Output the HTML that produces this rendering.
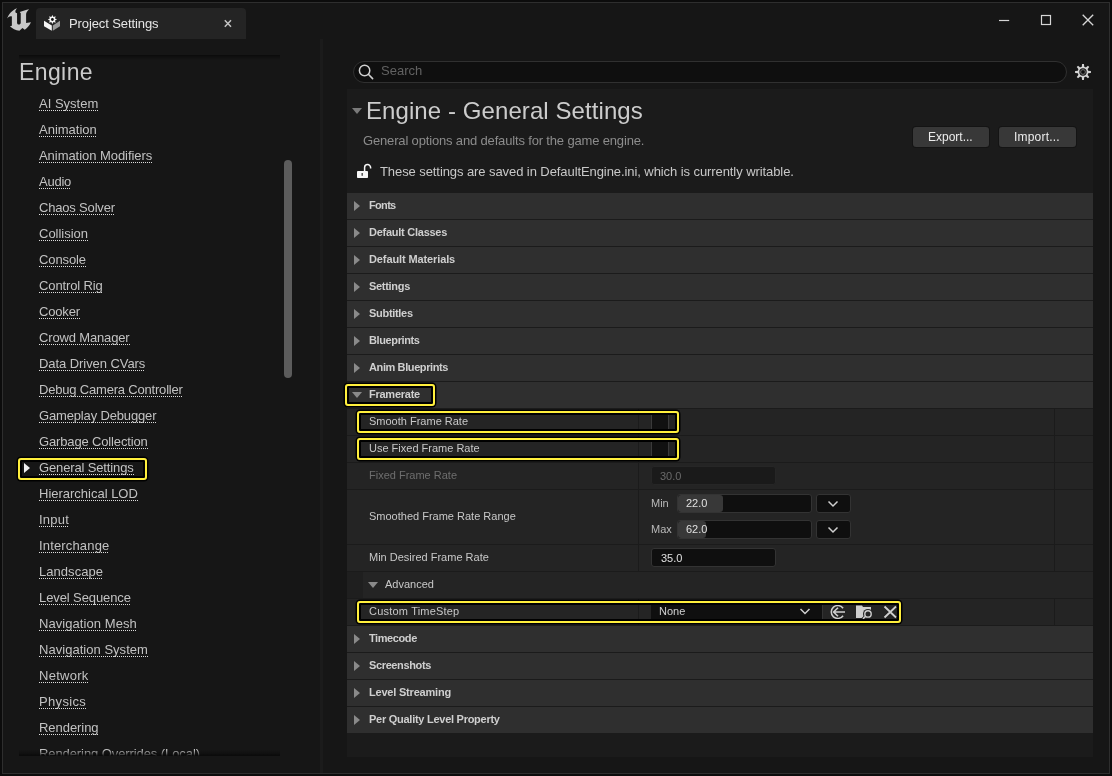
<!DOCTYPE html>
<html><head><meta charset="utf-8">
<style>
*{box-sizing:border-box;margin:0;padding:0}
html,body{width:1112px;height:776px;overflow:hidden;background:#0c0c0c;font-family:"Liberation Sans",sans-serif;}
.abs{position:absolute}
.t{position:absolute;white-space:nowrap;line-height:1;will-change:transform}
.hl{position:absolute;border:2px solid #ffef3c;border-radius:3px;box-shadow:0 0 0 1.5px #000,inset 0 0 0 2px #000}
.u{position:absolute;height:1px;background:repeating-linear-gradient(90deg,#dcdcdc 0 1px,transparent 1px 2px)}
svg{position:absolute;overflow:visible}
</style></head><body>

<div class="abs" style="left:2px;top:2px;width:1108px;height:772px;background:#161616;border:1px solid #2e2e2e"></div>
<svg style="left:6px;top:7px" width="26" height="26" viewBox="0 0 776 776"><path fill="#c8c8c8" d="M 35 345 C 65 235, 170 95, 330 35 C 285 80, 265 130, 290 170 L 330 185 L 330 470 C 330 510, 360 525, 385 525 C 415 525, 440 505, 440 470 L 440 185 L 410 150 C 500 120, 600 80, 690 65 C 640 110, 600 160, 600 220 L 600 480 L 745 455 C 700 560, 620 640, 560 680 L 490 630 L 400 712 C 290 700, 180 640, 118 575 L 175 560 L 175 280 C 130 260, 80 280, 35 345 Z"/></svg>
<div class="abs" style="left:36px;top:8px;width:210px;height:31px;background:#242424;border-radius:4px 4px 0 0"></div>
<svg style="left:42px;top:12px" width="20" height="20" viewBox="42 12 20 20">
<polygon fill="#f4f4f4" points="44,20.8 51.8,25.4 51.8,30.8 44,26.2"/>
<polygon fill="#9a9a9a" points="52.8,25.4 60,20.8 60,26.2 52.8,30.8"/>
<g transform="translate(52.4,19.5)" fill="#f4f4f4">
<path d="M0,-4.6 L1.1,-2.6 L3.25,-3.25 L2.6,-1.1 L4.6,0 L2.6,1.1 L3.25,3.25 L1.1,2.6 L0,4.6 L-1.1,2.6 L-3.25,3.25 L-2.6,1.1 L-4.6,0 L-2.6,-1.1 L-3.25,-3.25 L-1.1,-2.6 Z"/>
<circle r="1.4" fill="#111"/>
</g></svg>
<div class="t" style="left:69px;top:17px;font-size:13px;color:#e6e6e6;font-weight:normal;letter-spacing:-0.1px;">Project Settings</div>
<svg style="left:222px;top:17px" width="13" height="13" viewBox="0 0 13 13"><path d="M2.8 3.2 L9.0 9.8 M9.0 3.2 L2.8 9.8" stroke="#c4c4c4" stroke-width="1.5"/></svg>
<svg style="left:990px;top:5px" width="120" height="35" viewBox="990 5 120 35">
<path d="M999 20.5 H1009.2" stroke="#d6d6d6" stroke-width="1.2"/>
<rect x="1041.5" y="15.5" width="9" height="9" fill="none" stroke="#d6d6d6" stroke-width="1.2"/>
<path d="M1082.7 14.8 L1093.2 25.3 M1093.2 14.8 L1082.7 25.3" stroke="#d6d6d6" stroke-width="1.3"/>
</svg>
<div class="abs" style="left:19px;top:55px;width:261px;height:5px;background:linear-gradient(#0a0a0a,#0f0f0f 30%,rgba(22,22,22,0));"></div>
<div class="t" style="left:18.6px;top:61px;font-size:23px;color:#cacaca;font-weight:normal;letter-spacing:0.4px;">Engine</div>
<div class="t" style="left:38.7px;top:97px;font-size:13px;color:#c2c2c2;font-weight:normal;letter-spacing:0.0px;">AI System</div>
<div class="u" style="left:39px;top:110px;width:59px"></div>
<div class="t" style="left:38.7px;top:123px;font-size:13px;color:#c2c2c2;font-weight:normal;letter-spacing:0.0px;">Animation</div>
<div class="u" style="left:39px;top:136px;width:58px"></div>
<div class="t" style="left:38.7px;top:149px;font-size:13px;color:#c2c2c2;font-weight:normal;letter-spacing:-0.05px;">Animation Modifiers</div>
<div class="u" style="left:39px;top:162px;width:113px"></div>
<div class="t" style="left:38.7px;top:175px;font-size:13px;color:#c2c2c2;font-weight:normal;letter-spacing:-0.25px;">Audio</div>
<div class="u" style="left:39px;top:188px;width:32px"></div>
<div class="t" style="left:38.7px;top:201px;font-size:13px;color:#c2c2c2;font-weight:normal;letter-spacing:-0.182px;">Chaos Solver</div>
<div class="u" style="left:39px;top:214px;width:76px"></div>
<div class="t" style="left:38.7px;top:227px;font-size:13px;color:#c2c2c2;font-weight:normal;letter-spacing:-0.013px;">Collision</div>
<div class="u" style="left:39px;top:240px;width:49px"></div>
<div class="t" style="left:38.7px;top:253px;font-size:13px;color:#c2c2c2;font-weight:normal;letter-spacing:-0.1px;">Console</div>
<div class="u" style="left:39px;top:266px;width:47px"></div>
<div class="t" style="left:38.7px;top:279px;font-size:13px;color:#c2c2c2;font-weight:normal;letter-spacing:-0.12px;">Control Rig</div>
<div class="u" style="left:39px;top:292px;width:64px"></div>
<div class="t" style="left:38.7px;top:305px;font-size:13px;color:#c2c2c2;font-weight:normal;letter-spacing:-0.16px;">Cooker</div>
<div class="u" style="left:39px;top:318px;width:41px"></div>
<div class="t" style="left:38.7px;top:331px;font-size:13px;color:#c2c2c2;font-weight:normal;letter-spacing:-0.15px;">Crowd Manager</div>
<div class="u" style="left:39px;top:344px;width:91px"></div>
<div class="t" style="left:38.7px;top:357px;font-size:13px;color:#c2c2c2;font-weight:normal;letter-spacing:-0.069px;">Data Driven CVars</div>
<div class="u" style="left:39px;top:370px;width:106px"></div>
<div class="t" style="left:38.7px;top:383px;font-size:13px;color:#c2c2c2;font-weight:normal;letter-spacing:-0.191px;">Debug Camera Controller</div>
<div class="u" style="left:39px;top:396px;width:144px"></div>
<div class="t" style="left:38.7px;top:409px;font-size:13px;color:#c2c2c2;font-weight:normal;letter-spacing:-0.156px;">Gameplay Debugger</div>
<div class="u" style="left:39px;top:422px;width:117px"></div>
<div class="t" style="left:38.7px;top:435px;font-size:13px;color:#c2c2c2;font-weight:normal;letter-spacing:-0.147px;">Garbage Collection</div>
<div class="u" style="left:39px;top:448px;width:109px"></div>
<div class="t" style="left:38.7px;top:461px;font-size:13px;color:#c2c2c2;font-weight:normal;letter-spacing:-0.14px;">General Settings</div>
<div class="u" style="left:39px;top:474px;width:95px"></div>
<div class="t" style="left:38.7px;top:487px;font-size:13px;color:#c2c2c2;font-weight:normal;letter-spacing:-0.007px;">Hierarchical LOD</div>
<div class="u" style="left:39px;top:500px;width:99px"></div>
<div class="t" style="left:38.7px;top:513px;font-size:13px;color:#c2c2c2;font-weight:normal;letter-spacing:0.225px;">Input</div>
<div class="u" style="left:39px;top:526px;width:30px"></div>
<div class="t" style="left:38.7px;top:539px;font-size:13px;color:#c2c2c2;font-weight:normal;letter-spacing:0.16px;">Interchange</div>
<div class="u" style="left:39px;top:552px;width:70px"></div>
<div class="t" style="left:38.7px;top:565px;font-size:13px;color:#c2c2c2;font-weight:normal;letter-spacing:0.05px;">Landscape</div>
<div class="u" style="left:39px;top:578px;width:64px"></div>
<div class="t" style="left:38.7px;top:591px;font-size:13px;color:#c2c2c2;font-weight:normal;letter-spacing:-0.1px;">Level Sequence</div>
<div class="u" style="left:39px;top:604px;width:92px"></div>
<div class="t" style="left:38.7px;top:617px;font-size:13px;color:#c2c2c2;font-weight:normal;letter-spacing:0.064px;">Navigation Mesh</div>
<div class="u" style="left:39px;top:630px;width:98px"></div>
<div class="t" style="left:38.7px;top:643px;font-size:13px;color:#c2c2c2;font-weight:normal;letter-spacing:0.031px;">Navigation System</div>
<div class="u" style="left:39px;top:656px;width:109px"></div>
<div class="t" style="left:38.7px;top:669px;font-size:13px;color:#c2c2c2;font-weight:normal;letter-spacing:0.267px;">Network</div>
<div class="u" style="left:39px;top:682px;width:49px"></div>
<div class="t" style="left:38.7px;top:695px;font-size:13px;color:#c2c2c2;font-weight:normal;letter-spacing:0.333px;">Physics</div>
<div class="u" style="left:39px;top:708px;width:47px"></div>
<div class="t" style="left:38.7px;top:721px;font-size:13px;color:#c2c2c2;font-weight:normal;letter-spacing:-0.05px;">Rendering</div>
<div class="u" style="left:39px;top:734px;width:60px"></div>
<div class="t" style="left:38.7px;top:747px;font-size:13px;color:#c2c2c2;font-weight:normal;letter-spacing:-0.088px;">Rendering Overrides (Local)</div>
<div class="u" style="left:39px;top:760px;width:161px"></div>
<div class="abs" style="left:3px;top:756px;width:317px;height:17px;background:#161616;"></div>
<div class="abs" style="left:19px;top:750px;width:261px;height:6px;background:linear-gradient(rgba(10,10,10,0),rgba(10,10,10,0.5) 60%,#0a0a0a);"></div>
<div class="hl" style="left:18px;top:458px;width:129px;height:22px"></div>
<div class="abs" style="left:24px;top:463px;width:0;height:0;border-left:6px solid #f0f0f0;border-top:5px solid transparent;border-bottom:5px solid transparent"></div>
<div class="abs" style="left:284px;top:160px;width:8px;height:218px;background:#5c5c5c;border-radius:4px"></div>
<div class="abs" style="left:320px;top:39px;width:3px;height:734px;background:#1b1b1b;"></div>
<div class="abs" style="left:353px;top:61px;width:714px;height:22px;background:#0f0f0f;border:1px solid #303030;border-radius:11px"></div>
<svg style="left:355px;top:62px" width="20" height="20" viewBox="355 62 20 20"><circle cx="364.6" cy="70.5" r="5.2" fill="none" stroke="#d0d0d0" stroke-width="1.5"/><path d="M368.6 74.5 L372.6 78.6" stroke="#d0d0d0" stroke-width="1.6" stroke-linecap="round"/></svg>
<div class="t" style="left:381px;top:64px;font-size:13px;color:#626262;font-weight:normal;letter-spacing:0px;">Search</div>
<svg style="left:1073px;top:62px" width="20" height="20" viewBox="-10 -10 20 20"><g fill="#d4d4d4"><path d="M-1.25 -4.5 L-0.95 -7.9 H0.95 L1.25 -4.5 Z" transform="rotate(0)"/><path d="M-1.25 -4.5 L-0.95 -7.9 H0.95 L1.25 -4.5 Z" transform="rotate(45)"/><path d="M-1.25 -4.5 L-0.95 -7.9 H0.95 L1.25 -4.5 Z" transform="rotate(90)"/><path d="M-1.25 -4.5 L-0.95 -7.9 H0.95 L1.25 -4.5 Z" transform="rotate(135)"/><path d="M-1.25 -4.5 L-0.95 -7.9 H0.95 L1.25 -4.5 Z" transform="rotate(180)"/><path d="M-1.25 -4.5 L-0.95 -7.9 H0.95 L1.25 -4.5 Z" transform="rotate(225)"/><path d="M-1.25 -4.5 L-0.95 -7.9 H0.95 L1.25 -4.5 Z" transform="rotate(270)"/><path d="M-1.25 -4.5 L-0.95 -7.9 H0.95 L1.25 -4.5 Z" transform="rotate(315)"/><circle r="5.4"/></g><circle r="3.7" fill="#141414"/><circle r="2.4" fill="none" stroke="#707070" stroke-width="1"/><circle r="1.1" fill="#0e0e0e"/></svg>
<div class="abs" style="left:347px;top:89px;width:746px;height:668px;background:#1b1b1b;"></div>
<div class="abs" style="left:352px;top:108px;width:0;height:0;border-top:6px solid #7a7a7a;border-left:5px solid transparent;border-right:5px solid transparent"></div>
<div class="t" style="left:366px;top:99px;font-size:24px;color:#cccccc;font-weight:normal;letter-spacing:0.08px;">Engine - General Settings</div>
<div class="t" style="left:363px;top:134px;font-size:13px;color:#8c8c8c;font-weight:normal;letter-spacing:-0.16px;">General options and defaults for the game engine.</div>
<div class="abs" style="left:913px;top:127px;width:76px;height:20px;background:#383838;border-radius:3px;box-shadow:0 0 0 1px #141414"></div>
<div class="abs" style="left:999px;top:127px;width:77px;height:20px;background:#383838;border-radius:3px;box-shadow:0 0 0 1px #141414"></div>
<div class="t" style="left:928px;top:131px;font-size:12px;color:#ececec;font-weight:normal;letter-spacing:0px;">Export...</div>
<div class="t" style="left:1014px;top:131px;font-size:12px;color:#ececec;font-weight:normal;letter-spacing:0.2px;">Import...</div>
<svg style="left:352px;top:160px" width="25" height="22" viewBox="352 160 25 22"><rect x="357" y="171" width="11" height="7" rx="0.8" fill="#f6f6f6"/><rect x="361.6" y="173" width="1.1" height="2.8" fill="#1b1b1b"/><path d="M364.6 171.5 V167.6 A3 3 0 0 1 370.6 167.6 V168.6" fill="none" stroke="#f6f6f6" stroke-width="1.5"/></svg>
<div class="t" style="left:380px;top:165px;font-size:13px;color:#c8c8c8;font-weight:normal;letter-spacing:-0.08px;">These settings are saved in DefaultEngine.ini, which is currently writable.</div>
<div class="abs" style="left:347px;top:193px;width:746px;height:26px;background:#2f2f2f;"></div>
<div class="abs" style="left:347px;top:219px;width:746px;height:1px;background:#1b1b1b;"></div>
<div class="abs" style="left:354px;top:201px;width:0;height:0;border-left:6px solid #8a8a8a;border-top:5px solid transparent;border-bottom:5px solid transparent"></div>
<div class="t" style="left:369px;top:200px;font-size:11px;color:#cfcfcf;font-weight:bold;letter-spacing:-0.675px;">Fonts</div>
<div class="abs" style="left:347px;top:220px;width:746px;height:26px;background:#2f2f2f;"></div>
<div class="abs" style="left:347px;top:246px;width:746px;height:1px;background:#1b1b1b;"></div>
<div class="abs" style="left:354px;top:228px;width:0;height:0;border-left:6px solid #8a8a8a;border-top:5px solid transparent;border-bottom:5px solid transparent"></div>
<div class="t" style="left:369px;top:227px;font-size:11px;color:#cfcfcf;font-weight:bold;letter-spacing:-0.257px;">Default Classes</div>
<div class="abs" style="left:347px;top:247px;width:746px;height:26px;background:#2f2f2f;"></div>
<div class="abs" style="left:347px;top:273px;width:746px;height:1px;background:#1b1b1b;"></div>
<div class="abs" style="left:354px;top:255px;width:0;height:0;border-left:6px solid #8a8a8a;border-top:5px solid transparent;border-bottom:5px solid transparent"></div>
<div class="t" style="left:369px;top:254px;font-size:11px;color:#cfcfcf;font-weight:bold;letter-spacing:-0.113px;">Default Materials</div>
<div class="abs" style="left:347px;top:274px;width:746px;height:26px;background:#2f2f2f;"></div>
<div class="abs" style="left:347px;top:300px;width:746px;height:1px;background:#1b1b1b;"></div>
<div class="abs" style="left:354px;top:282px;width:0;height:0;border-left:6px solid #8a8a8a;border-top:5px solid transparent;border-bottom:5px solid transparent"></div>
<div class="t" style="left:369px;top:281px;font-size:11px;color:#cfcfcf;font-weight:bold;letter-spacing:-0.3px;">Settings</div>
<div class="abs" style="left:347px;top:301px;width:746px;height:26px;background:#2f2f2f;"></div>
<div class="abs" style="left:347px;top:327px;width:746px;height:1px;background:#1b1b1b;"></div>
<div class="abs" style="left:354px;top:309px;width:0;height:0;border-left:6px solid #8a8a8a;border-top:5px solid transparent;border-bottom:5px solid transparent"></div>
<div class="t" style="left:369px;top:308px;font-size:11px;color:#cfcfcf;font-weight:bold;letter-spacing:-0.3px;">Subtitles</div>
<div class="abs" style="left:347px;top:328px;width:746px;height:26px;background:#2f2f2f;"></div>
<div class="abs" style="left:347px;top:354px;width:746px;height:1px;background:#1b1b1b;"></div>
<div class="abs" style="left:354px;top:336px;width:0;height:0;border-left:6px solid #8a8a8a;border-top:5px solid transparent;border-bottom:5px solid transparent"></div>
<div class="t" style="left:369px;top:335px;font-size:11px;color:#cfcfcf;font-weight:bold;letter-spacing:-0.378px;">Blueprints</div>
<div class="abs" style="left:347px;top:355px;width:746px;height:26px;background:#2f2f2f;"></div>
<div class="abs" style="left:347px;top:381px;width:746px;height:1px;background:#1b1b1b;"></div>
<div class="abs" style="left:354px;top:363px;width:0;height:0;border-left:6px solid #8a8a8a;border-top:5px solid transparent;border-bottom:5px solid transparent"></div>
<div class="t" style="left:369px;top:362px;font-size:11px;color:#cfcfcf;font-weight:bold;letter-spacing:-0.393px;">Anim Blueprints</div>
<div class="abs" style="left:347px;top:382px;width:746px;height:26px;background:#2f2f2f;"></div>
<div class="abs" style="left:347px;top:408px;width:746px;height:1px;background:#1b1b1b;"></div>
<div class="abs" style="left:352px;top:392px;width:0;height:0;border-top:6px solid #8a8a8a;border-left:5px solid transparent;border-right:5px solid transparent"></div>
<div class="t" style="left:369px;top:389px;font-size:11px;color:#cfcfcf;font-weight:bold;letter-spacing:-0.25px;">Framerate</div>
<div class="abs" style="left:347px;top:409px;width:746px;height:26px;background:#242424;"></div>
<div class="abs" style="left:347px;top:435px;width:746px;height:1px;background:#1b1b1b;"></div>
<div class="abs" style="left:638px;top:409px;width:1px;height:26px;background:#1b1b1b;"></div>
<div class="abs" style="left:1054px;top:409px;width:1px;height:26px;background:#1b1b1b;"></div>
<div class="t" style="left:369px;top:416px;font-size:11px;color:#c8c8c8;font-weight:normal;letter-spacing:0px;">Smooth Frame Rate</div>
<div class="abs" style="left:347px;top:436px;width:746px;height:26px;background:#242424;"></div>
<div class="abs" style="left:347px;top:462px;width:746px;height:1px;background:#1b1b1b;"></div>
<div class="abs" style="left:638px;top:436px;width:1px;height:26px;background:#1b1b1b;"></div>
<div class="abs" style="left:1054px;top:436px;width:1px;height:26px;background:#1b1b1b;"></div>
<div class="t" style="left:369px;top:443px;font-size:11px;color:#c8c8c8;font-weight:normal;letter-spacing:0px;">Use Fixed Frame Rate</div>
<div class="abs" style="left:347px;top:463px;width:746px;height:26px;background:#242424;"></div>
<div class="abs" style="left:347px;top:489px;width:746px;height:1px;background:#1b1b1b;"></div>
<div class="abs" style="left:638px;top:463px;width:1px;height:26px;background:#1b1b1b;"></div>
<div class="abs" style="left:1054px;top:463px;width:1px;height:26px;background:#1b1b1b;"></div>
<div class="t" style="left:369px;top:470px;font-size:11px;color:#6e6e6e;font-weight:normal;letter-spacing:0px;">Fixed Frame Rate</div>
<div class="abs" style="left:347px;top:490px;width:746px;height:54px;background:#242424;"></div>
<div class="abs" style="left:347px;top:544px;width:746px;height:1px;background:#1b1b1b;"></div>
<div class="abs" style="left:638px;top:490px;width:1px;height:54px;background:#1b1b1b;"></div>
<div class="abs" style="left:1054px;top:490px;width:1px;height:54px;background:#1b1b1b;"></div>
<div class="t" style="left:369px;top:511px;font-size:11px;color:#c8c8c8;font-weight:normal;letter-spacing:0px;">Smoothed Frame Rate Range</div>
<div class="abs" style="left:347px;top:545px;width:746px;height:26px;background:#242424;"></div>
<div class="abs" style="left:347px;top:571px;width:746px;height:1px;background:#1b1b1b;"></div>
<div class="abs" style="left:638px;top:545px;width:1px;height:26px;background:#1b1b1b;"></div>
<div class="abs" style="left:1054px;top:545px;width:1px;height:26px;background:#1b1b1b;"></div>
<div class="t" style="left:369px;top:552px;font-size:11px;color:#c8c8c8;font-weight:normal;letter-spacing:0px;">Min Desired Frame Rate</div>
<div class="abs" style="left:347px;top:572px;width:746px;height:26px;background:#242424;"></div>
<div class="abs" style="left:347px;top:572px;width:16px;height:26px;background:#1f1f1f;"></div>
<div class="abs" style="left:347px;top:598px;width:746px;height:1px;background:#1b1b1b;"></div>
<div class="abs" style="left:368px;top:582px;width:0;height:0;border-top:6px solid #8a8a8a;border-left:5px solid transparent;border-right:5px solid transparent"></div>
<div class="t" style="left:385px;top:579px;font-size:11px;color:#c8c8c8;font-weight:normal;letter-spacing:0px;">Advanced</div>
<div class="abs" style="left:347px;top:599px;width:746px;height:26px;background:#242424;"></div>
<div class="abs" style="left:347px;top:625px;width:746px;height:1px;background:#1b1b1b;"></div>
<div class="abs" style="left:638px;top:599px;width:1px;height:26px;background:#1b1b1b;"></div>
<div class="abs" style="left:1054px;top:599px;width:1px;height:26px;background:#1b1b1b;"></div>
<div class="t" style="left:369px;top:606px;font-size:11px;color:#c8c8c8;font-weight:normal;letter-spacing:0.2px;">Custom TimeStep</div>
<div class="abs" style="left:347px;top:626px;width:746px;height:26px;background:#2f2f2f;"></div>
<div class="abs" style="left:347px;top:652px;width:746px;height:1px;background:#1b1b1b;"></div>
<div class="abs" style="left:354px;top:634px;width:0;height:0;border-left:6px solid #8a8a8a;border-top:5px solid transparent;border-bottom:5px solid transparent"></div>
<div class="t" style="left:369px;top:633px;font-size:11px;color:#cfcfcf;font-weight:bold;letter-spacing:-0.414px;">Timecode</div>
<div class="abs" style="left:347px;top:653px;width:746px;height:26px;background:#2f2f2f;"></div>
<div class="abs" style="left:347px;top:679px;width:746px;height:1px;background:#1b1b1b;"></div>
<div class="abs" style="left:354px;top:661px;width:0;height:0;border-left:6px solid #8a8a8a;border-top:5px solid transparent;border-bottom:5px solid transparent"></div>
<div class="t" style="left:369px;top:660px;font-size:11px;color:#cfcfcf;font-weight:bold;letter-spacing:-0.37px;">Screenshots</div>
<div class="abs" style="left:347px;top:680px;width:746px;height:26px;background:#2f2f2f;"></div>
<div class="abs" style="left:347px;top:706px;width:746px;height:1px;background:#1b1b1b;"></div>
<div class="abs" style="left:354px;top:688px;width:0;height:0;border-left:6px solid #8a8a8a;border-top:5px solid transparent;border-bottom:5px solid transparent"></div>
<div class="t" style="left:369px;top:687px;font-size:11px;color:#cfcfcf;font-weight:bold;letter-spacing:-0.2px;">Level Streaming</div>
<div class="abs" style="left:347px;top:707px;width:746px;height:26px;background:#2f2f2f;"></div>
<div class="abs" style="left:347px;top:733px;width:746px;height:1px;background:#1b1b1b;"></div>
<div class="abs" style="left:354px;top:715px;width:0;height:0;border-left:6px solid #8a8a8a;border-top:5px solid transparent;border-bottom:5px solid transparent"></div>
<div class="t" style="left:369px;top:714px;font-size:11px;color:#cfcfcf;font-weight:bold;letter-spacing:-0.264px;">Per Quality Level Property</div>
<div class="abs" style="left:347px;top:733px;width:746px;height:24px;background:#1b1b1b;"></div>
<div class="abs" style="left:651px;top:413px;width:18px;height:18px;background:#111111;border:1px solid #3a3a3a"></div>
<div class="abs" style="left:651px;top:440px;width:18px;height:18px;background:#111111;border:1px solid #3a3a3a"></div>
<div class="abs" style="left:651px;top:466px;width:125px;height:19px;background:#1a1a1a;border:1px solid #262626;border-radius:3px"></div>
<div class="t" style="left:660px;top:471px;font-size:11px;color:#6a6a6a;font-weight:normal;letter-spacing:0px;">30.0</div>
<div class="t" style="left:651px;top:498px;font-size:11px;color:#b8b8b8;font-weight:normal;letter-spacing:0px;">Min</div>
<div class="t" style="left:651px;top:524px;font-size:11px;color:#b8b8b8;font-weight:normal;letter-spacing:0px;">Max</div>
<div class="abs" style="left:677px;top:494px;width:135px;height:19px;background:#0f0f0f;border:1px solid #333333;border-radius:3px"></div>
<div class="abs" style="left:678px;top:495px;width:45px;height:17px;background:#383838;border-radius:3px"></div>
<div class="t" style="left:686px;top:498px;font-size:11px;color:#e0e0e0;font-weight:normal;letter-spacing:0px;">22.0</div>
<div class="abs" style="left:816px;top:494px;width:35px;height:19px;background:#0f0f0f;border:1px solid #333333;border-radius:3px"></div>
<svg style="left:826px;top:499px" width="14" height="9" viewBox="0 0 14 9"><path d="M2.5 2.5 L7 7 L11.5 2.5" fill="none" stroke="#d0d0d0" stroke-width="1.5"/></svg>
<div class="abs" style="left:677px;top:520px;width:135px;height:19px;background:#0f0f0f;border:1px solid #333333;border-radius:3px"></div>
<div class="abs" style="left:678px;top:521px;width:28px;height:17px;background:#383838;border-radius:3px"></div>
<div class="t" style="left:686px;top:524px;font-size:11px;color:#e0e0e0;font-weight:normal;letter-spacing:0px;">62.0</div>
<div class="abs" style="left:816px;top:520px;width:35px;height:19px;background:#0f0f0f;border:1px solid #333333;border-radius:3px"></div>
<svg style="left:826px;top:525px" width="14" height="9" viewBox="0 0 14 9"><path d="M2.5 2.5 L7 7 L11.5 2.5" fill="none" stroke="#d0d0d0" stroke-width="1.5"/></svg>
<div class="abs" style="left:651px;top:548px;width:125px;height:19px;background:#0f0f0f;border:1px solid #333333;border-radius:3px"></div>
<div class="t" style="left:661px;top:553px;font-size:11px;color:#e0e0e0;font-weight:normal;letter-spacing:0px;">35.0</div>
<div class="abs" style="left:651px;top:603px;width:172px;height:20px;background:#0f0f0f;"></div>
<div class="abs" style="left:822px;top:603px;width:1px;height:20px;background:#333;"></div>
<div class="t" style="left:659px;top:606px;font-size:11px;color:#d0d0d0;font-weight:normal;letter-spacing:0px;">None</div>
<svg style="left:798px;top:606px" width="14" height="11" viewBox="0 0 14 11"><path d="M2.5 3 L7 7.5 L11.5 3" fill="none" stroke="#d0d0d0" stroke-width="1.5"/></svg>
<svg style="left:826px;top:602px" width="76" height="22" viewBox="826 602 76 22">
<path d="M843.1 608.3 A6.5 6.5 0 1 0 843.1 615.7" fill="none" stroke="#cfcfcf" stroke-width="1.5"/>
<path d="M845 612 H834 M838 607.7 L833.6 612 L838 616.3" fill="none" stroke="#cfcfcf" stroke-width="1.6"/>
<path d="M856 605.4 H862 L863 607 H871 V618 H856 Z" fill="#cfcfcf"/>
<circle cx="868" cy="613.9" r="5" fill="#242424"/>
<path d="M865.5 616.6 L862.8 619.2" stroke="#242424" stroke-width="3.4"/>
<circle cx="868" cy="613.9" r="3.2" fill="none" stroke="#cfcfcf" stroke-width="1.4"/>
<path d="M865.6 616.3 L863 618.9" stroke="#cfcfcf" stroke-width="1.5"/>
<path d="M884.5 606.5 L896 617.5 M896 606.5 L884.5 617.5" stroke="#cfcfcf" stroke-width="1.8"/>
</svg>
<div class="hl" style="left:345px;top:384px;width:90px;height:22px"></div>
<div class="hl" style="left:357px;top:411px;width:322px;height:22px"></div>
<div class="hl" style="left:357px;top:438px;width:322px;height:22px"></div>
<div class="hl" style="left:357px;top:601px;width:544px;height:22px"></div>
</body></html>
